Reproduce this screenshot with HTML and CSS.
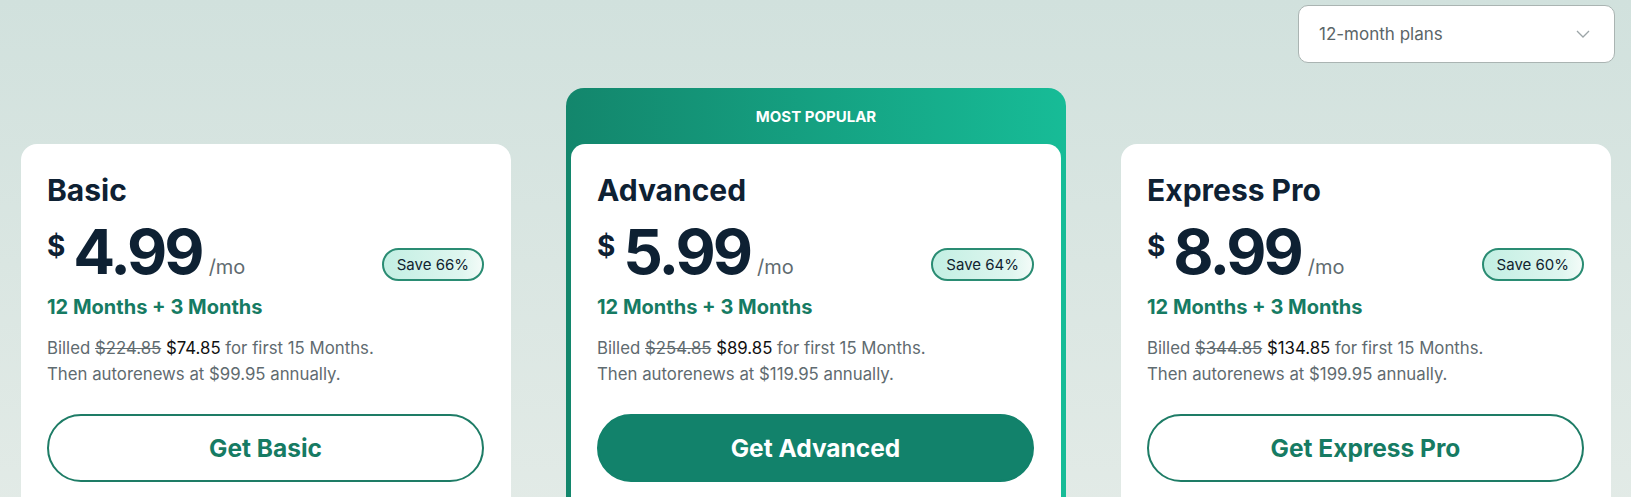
FILE: index.html
```html
<!DOCTYPE html>
<html>
<head>
  <title>Plans</title>
  <link rel="stylesheet" href="styles.css">
</head>
<body>
  <div class="topbar">
    <div class="plan-select">
      <span>12-month plans</span>
      <svg width="14" height="8" viewBox="0 0 14 8"><path d="M1 1 L7 7 L13 1" fill="none" stroke="#9ca5a7" stroke-width="1.3"/></svg>
    </div>
  </div>

  <div class="plans">
    <div class="card">
      <h2>Basic</h2>
      <div class="price-row">
        <span class="cur">$</span>
        <span class="amount">4.99</span>
        <span class="per">/mo</span>
        <span class="save">Save 66%</span>
      </div>
      <div class="months">12 Months + 3 Months</div>
      <p class="billed">Billed <s>$224.85</s> <b>$74.85</b> for first 15 Months.<br>Then autorenews at $99.95 annually.</p>
      <button class="get">Get Basic</button>
    </div>

    <div class="popular">
      <div class="popular-head">MOST POPULAR</div>
      <div class="card">
        <h2>Advanced</h2>
        <div class="price-row">
          <span class="cur">$</span>
          <span class="amount">5.99</span>
          <span class="per">/mo</span>
          <span class="save">Save 64%</span>
        </div>
        <div class="months">12 Months + 3 Months</div>
        <p class="billed">Billed <s>$254.85</s> <b>$89.85</b> for first 15 Months.<br>Then autorenews at $119.95 annually.</p>
        <button class="get filled">Get Advanced</button>
      </div>
    </div>

    <div class="card">
      <h2>Express Pro</h2>
      <div class="price-row">
        <span class="cur">$</span>
        <span class="amount">8.99</span>
        <span class="per">/mo</span>
        <span class="save">Save 60%</span>
      </div>
      <div class="months">12 Months + 3 Months</div>
      <p class="billed">Billed <s>$344.85</s> <b>$134.85</b> for first 15 Months.<br>Then autorenews at $199.95 annually.</p>
      <button class="get">Get Express Pro</button>
    </div>
  </div>
</body>
</html>
```

FILE: styles.css
```css
* {
  margin: 0;
  padding: 0;
  box-sizing: border-box;
}

body {
  font-family: Inter, "Noto Sans", sans-serif;
  color: #0e2133;
  min-height: 497px;
  overflow: hidden;
  background: linear-gradient(#d1e1dd, #e3ebe7);
}

.topbar {
  display: flex;
  justify-content: flex-end;
  padding: 5px 16px 0;
}

.plan-select {
  width: 317px;
  height: 58px;
  background: #fff;
  border: 1px solid #aab4b2;
  border-radius: 10px;
  display: flex;
  align-items: center;
  justify-content: space-between;
  padding: 0 24px 0 20px;
  font-size: 17px;
  color: #5b6568;
}

.plans {
  display: grid;
  grid-template-columns: repeat(3, 1fr);
  gap: 60px;
  padding: 25px 20px 0 21px;
  align-items: start;
}

.card {
  background: #fff;
  border-radius: 16px;
  padding: 28px 27px 40px 26px;
  margin-top: 56px;
}

.popular {
  margin: 0 -5px;
  padding: 0 5px 5px;
  border-radius: 18px;
  background: linear-gradient(90deg, #13866c, #17bc97);
}

.popular .card {
  margin-top: 0;
  border-radius: 14px;
}

.popular-head {
  height: 56px;
  display: flex;
  align-items: center;
  justify-content: center;
  color: #fff;
  font-size: 15px;
  font-weight: 700;
}

h2 {
  font-size: 30px;
  line-height: 36px;
  font-weight: 700;
}

.price-row {
  display: flex;
  align-items: baseline;
  margin-top: 12px;
  height: 64px;
  line-height: 64px;
}

.cur {
  align-self: flex-start;
  font-size: 28px;
  line-height: 28px;
  font-weight: 700;
  margin-top: 12px;
  margin-right: 8px;
}

.amount {
  font-size: 62px;
  font-weight: 700;
  letter-spacing: -3px;
}

.per {
  font-size: 20px;
  color: #5f6b70;
  margin-left: 7px;
}

.save {
  align-self: flex-end;
  margin-left: auto;
  margin-bottom: 3px;
  height: 33px;
  line-height: 29px;
  padding: 0 13px;
  border: 2px solid #2a8c73;
  border-radius: 17px;
  background: linear-gradient(90deg, #c3efe3, #dff6ef 80%, #f3fbf8);
  font-size: 15px;
  color: #10232f;
}

.months {
  margin-top: 9px;
  font-size: 20px;
  line-height: 28px;
  font-weight: 700;
  color: #167b63;
}

.billed {
  margin-top: 14px;
  font-size: 16.8px;
  line-height: 26px;
  color: #5f6b70;
}

.billed b {
  font-weight: 400;
  color: #111;
}

.get {
  display: block;
  width: 100%;
  height: 68px;
  margin-top: 27px;
  border: 2px solid #1e7c66;
  border-radius: 34px;
  background: #fff;
  color: #167b63;
  font-family: inherit;
  font-size: 24.5px;
  font-weight: 700;
  cursor: pointer;
}

.get.filled {
  background: #12826b;
  border-color: #12826b;
  color: #fff;
}
```
